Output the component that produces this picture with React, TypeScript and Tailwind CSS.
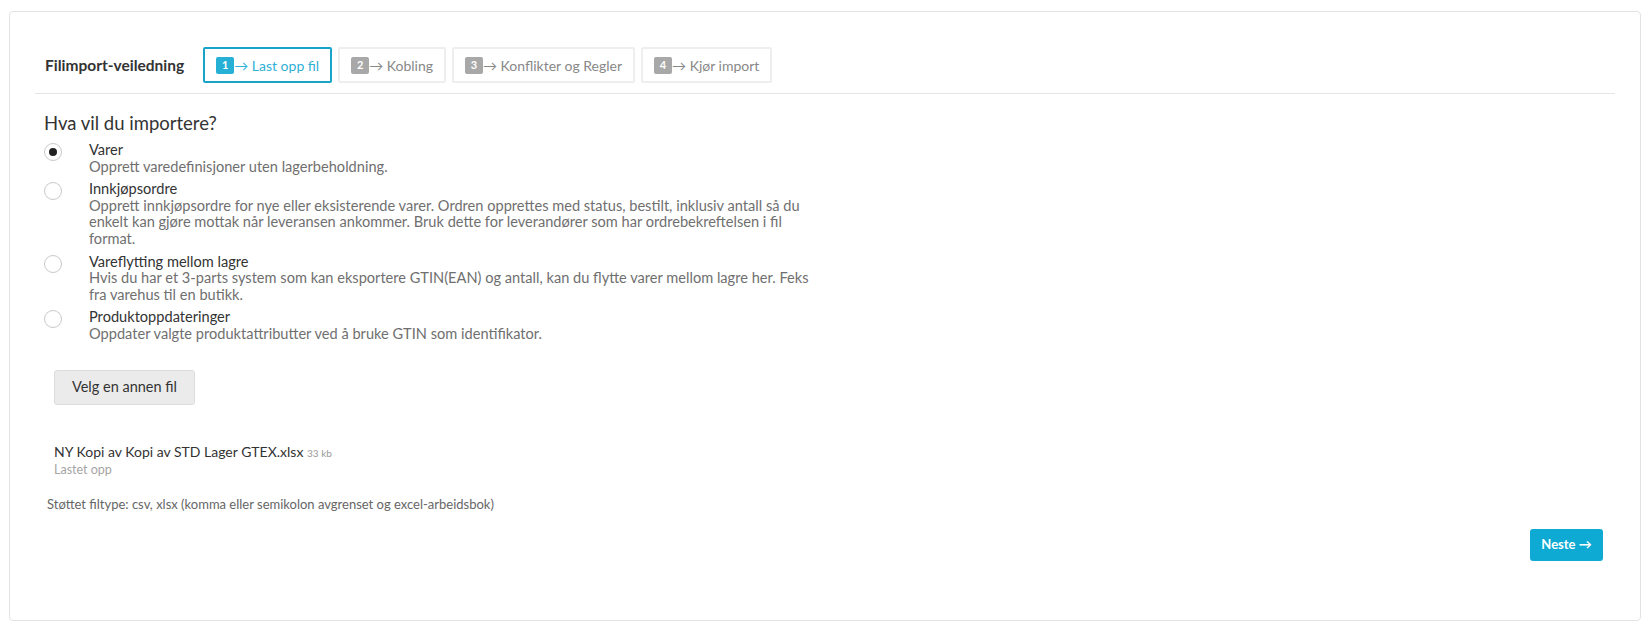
const steps = [
  { n: "1", label: "Last opp fil", active: true },
  { n: "2", label: "Kobling" },
  { n: "3", label: "Konflikter og Regler" },
  { n: "4", label: "Kjør import" },
];

const options = [
  { title: "Varer", desc: "Opprett varedefinisjoner uten lagerbeholdning.", checked: true },
  {
    title: "Innkjøpsordre",
    desc: "Opprett innkjøpsordre for nye eller eksisterende varer. Ordren opprettes med status, bestilt, inklusiv antall så du enkelt kan gjøre mottak når leveransen ankommer. Bruk dette for leverandører som har ordrebekreftelsen i fil format.",
  },
  {
    title: "Vareflytting mellom lagre",
    desc: "Hvis du har et 3-parts system som kan eksportere GTIN(EAN) og antall, kan du flytte varer mellom lagre her. Feks fra varehus til en butikk.",
  },
  { title: "Produktoppdateringer", desc: "Oppdater valgte produktattributter ved å bruke GTIN som identifikator." },
];

export default function App() {
  return (
    <div className="min-h-screen bg-white pt-[11px] px-[9px] font-['Lato',sans-serif] text-[#333]">
      <div className="h-[610px] border border-[#e3e3e3] rounded-[4px] px-[25px] pt-[35px]">
        <div className="flex items-center h-[47px] border-b border-[#e5e5e5] pb-[10px] pl-[10px]">
          <h2 className="text-[15.5px] font-bold mr-[19px] mt-[2px]">Filimport-veiledning</h2>
          <div className="flex gap-[6px]">
            {steps.map((s) => (
              <div
                key={s.n}
                className={
                  s.active
                    ? "flex items-center h-[36px] px-[11px] border-2 border-[#1aa3c8] rounded-[2px] text-[#2fb0d6] text-[14px]"
                    : "flex items-center h-[36px] px-[11px] border-2 border-[#eeeeee] rounded-[2px] text-[#888] text-[14px]"
                }
              >
                <span
                  className={
                    s.active
                      ? "flex items-center justify-center w-[18px] h-[17px] rounded-[2px] bg-[#26b0d6] text-white text-[11px] font-bold"
                      : "flex items-center justify-center w-[18px] h-[17px] rounded-[2px] bg-[#a8a8a8] text-white text-[11px] font-bold"
                  }
                >
                  {s.n}
                </span>
                <span>→ {s.label}</span>
              </div>
            ))}
          </div>
        </div>

        <div className="pl-[9px]">
          <h3 className="text-[18.5px] mt-[17px] leading-[24px]">Hva vil du importere?</h3>
          <div className="mt-[7px] flex flex-col gap-[6px]">
            {options.map((o) => (
              <label key={o.title} className="flex items-start">
                <span className="mt-[1px] w-[18px] h-[18px] rounded-full border border-[#c9c9c9] flex items-center justify-center shrink-0">
                  {o.checked && <span className="w-[8px] h-[8px] rounded-full bg-[#222]" />}
                </span>
                <span className="ml-[27px] max-w-[728px] text-[14.6px] leading-[16.6px]">
                  <span className="block text-[#333]">{o.title}</span>
                  <span className="block text-[#6f6f6f]">{o.desc}</span>
                </span>
              </label>
            ))}
          </div>

          <button className="mt-[27px] ml-[10px] w-[141px] h-[35px] bg-[#ebebeb] border border-[#dcdcdc] rounded-[3px] text-[14.5px] text-[#333]">
            Velg en annen fil
          </button>

          <div className="mt-[38px] ml-[10px]">
            <div className="text-[14px] leading-[17px] text-[#333]">
              NY Kopi av Kopi av STD Lager GTEX.xlsx <span className="text-[10px] text-[#999]">33 kb</span>
            </div>
            <div className="text-[12.5px] leading-[15px] text-[#a5a5a5]">Lastet opp</div>
          </div>

          <div className="mt-[18px] ml-[3px] text-[13px] text-[#666]">
            Støttet filtype: csv, xlsx (komma eller semikolon avgrenset og excel-arbeidsbok)
          </div>
        </div>

        <div className="flex justify-end mt-[15px] pr-[12px]">
          <button className="w-[73px] h-[32px] rounded-[3px] bg-[#0eaad3] text-white text-[13px] font-bold">
            Neste →
          </button>
        </div>
      </div>
    </div>
  );
}
